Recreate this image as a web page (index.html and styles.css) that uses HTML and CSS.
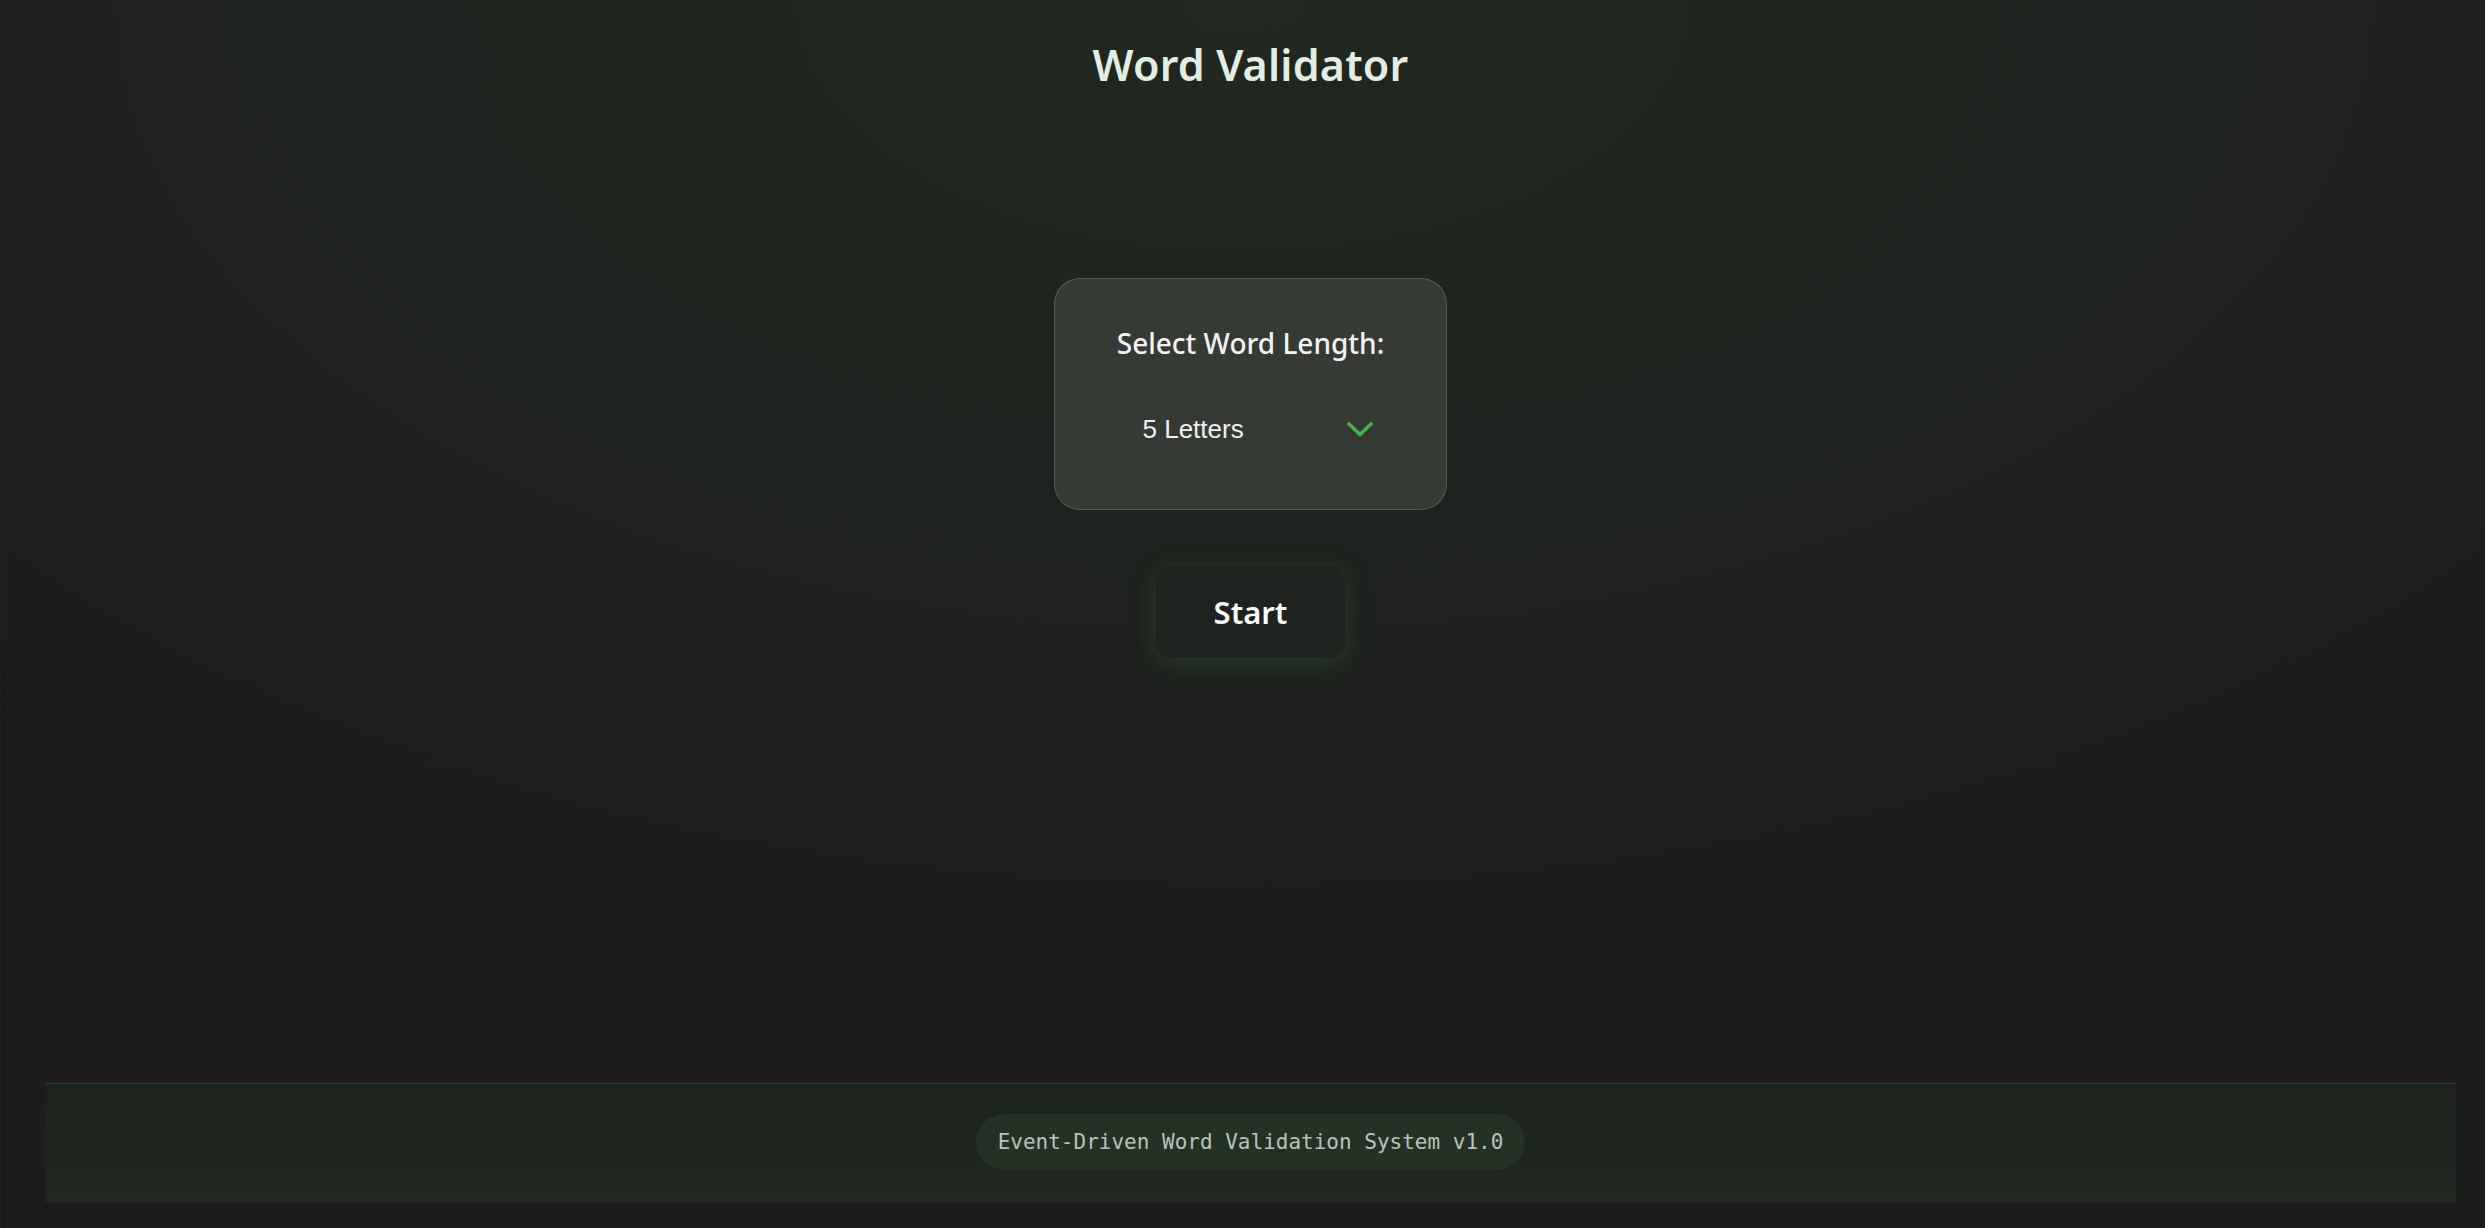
FILE: index.html
```html
<!DOCTYPE html>
<html lang="en">
<head>
<meta charset="utf-8">
<title>Word Validator</title>
<link rel="stylesheet" href="styles.css">
</head>
<body>
<div class="page">
  <header class="header">
    <h1 class="title">Word Validator</h1>
  </header>
  <main class="main">
    <div class="card">
      <label class="card-label" for="len">Select Word Length:</label>
      <div class="select">
        <span class="select-value">5 Letters</span>
        <svg class="chevron" width="26" height="15" viewBox="0 0 26 15" aria-hidden="true">
          <path d="M2 2 L13 12.5 L24 2" fill="none" stroke="#46b04c" stroke-width="3.6" stroke-linecap="round" stroke-linejoin="round"/>
        </svg>
      </div>
    </div>
    <button class="start">Start</button>
  </main>
  <footer class="footer">
    <span class="pill">Event-Driven Word Validation System v1.0</span>
  </footer>
</div>
</body>
</html>
```
FILE: styles.css
```css
html, body {
  margin: 0;
  padding: 0;
  height: 100%;
}
body {
  background: radial-gradient(ellipse 75% 85% at 50% 0%, #202820 0%, #1e221e 45%, #1c1c1c 100%);
  background-color: #1c1c1c;
  border-left: 1px solid #2b1c20;
  box-sizing: border-box;
  font-family: "Noto Sans", "Open Sans", sans-serif;
  color: #eee;
}
.page {
  height: 100vh;
  box-sizing: border-box;
  display: flex;
  flex-direction: column;
  padding: 0 29px 26px 44px;
}
.header {
  display: flex;
  justify-content: center;
  padding-top: 36px;
}
.title {
  margin: 0;
  font-size: 43px;
  font-weight: 600;
  color: #e2eee2;
  letter-spacing: 0.2px;
  line-height: 58px;
}
.main {
  flex: 1;
  display: flex;
  flex-direction: column;
  align-items: center;
  padding-top: 184px;
}
.card {
  width: 393px;
  height: 232px;
  box-sizing: border-box;
  background: #363a35;
  border: 1.5px solid rgba(255,255,255,0.16);
  border-radius: 26px;
  display: flex;
  flex-direction: column;
  align-items: center;
  padding-top: 44px;
}
.card-label {
  font-size: 28px;
  font-weight: 500;
  color: #f2f2f2;
  line-height: 40px;
}
.select {
  margin-top: 50px;
  margin-left: 14px;
  width: 230px;
  display: flex;
  align-items: center;
  justify-content: space-between;
  box-sizing: border-box;
}
.select-value {
  font-family: "Liberation Sans", Arial, sans-serif;
  font-size: 26px;
  color: #f0f0f0;
  line-height: 32px;
}
.chevron {
  display: block;
}
.start {
  margin-top: 56px;
  width: 189px;
  height: 92px;
  border: none;
  border-radius: 16px;
  background: #1e231f;
  color: #fafafa;
  font-family: "Noto Sans", "Open Sans", sans-serif;
  font-size: 31px;
  font-weight: 600;
  box-shadow: 0 4px 24px rgba(70, 160, 70, 0.26);
  cursor: pointer;
}
.footer {
  height: 119px;
  box-sizing: border-box;
  border-top: 1.5px solid rgba(76, 175, 80, 0.16);
  background: linear-gradient(180deg, #1c211c 0%, #202820 100%);
  display: flex;
  align-items: center;
  justify-content: center;
}
.pill {
  font-family: "DejaVu Sans Mono", monospace;
  font-size: 21px;
  color: #b9c2b8;
  background: #243226;
  border-radius: 30px;
  padding: 0 22px;
  height: 56px;
  line-height: 56px;
  display: inline-block;
  margin-bottom: 2px;
}
```
